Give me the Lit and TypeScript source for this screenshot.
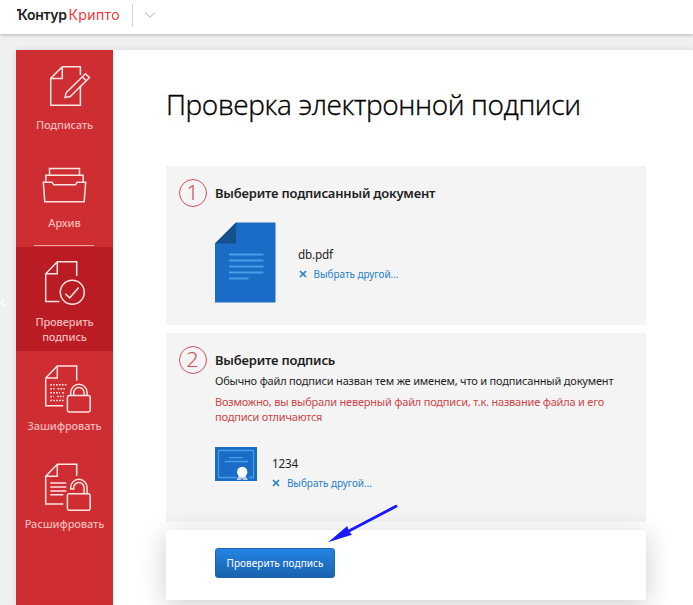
import { LitElement, html, css, svg } from "lit";
import { customElement } from "lit/decorators.js";

const page = (top: number, bottom: number, rightEnd: number, bottomEnd: number) =>
  svg`<path d="M60.7 ${rightEnd}V${top}H41.3L29.7 ${top + 12}V${bottom}H${bottomEnd}M41.3 ${top}V${top + 12}H29.7" />`;

const icons = {
  sign: svg`
    <path d="M64.4 25V16.7H46.3L34.7 28.4V55.3H64.4V35.5M46.3 16.7V28.4H34.7" />
    <path d="M49 47.6L50.2 42.6L69.4 23.7L73.5 27.6L54.3 46.6ZM66.2 26.8L70.2 30.8" />`,
  archive: svg`
    <path d="M33.5 27V20.5H63.5V27M29.8 34V27.3H67.2V34" />
    <path d="M27.3 34.2H36L37.7 36.7H59.6L61.2 34.2H69.7L68.2 53.7H28.8Z" />`,
  verify: svg`${page(14.7, 54.5, 29, 43.5)}
    <circle cx="56.3" cy="45.2" r="12" />
    <path d="M49.3 46.7L53.7 50.8L62.7 40.5" />`,
  encrypt: svg`${page(15, 54.7, 29.7, 47.3)}
    <path stroke-dasharray="1.7 1.2" d="M34.3 33.7H51M34.3 37.7H38.5M41.5 37.7H50M34.3 41.7H44M46 41.7H49M34.3 45.6H38M41 45.6H48M34.3 49.6H48" />
    <rect x="51.4" y="44.5" width="22.8" height="16.4" rx="2" />
    <path d="M54.7 44.5V41.5a8.2 8.2 0 0 1 16.4 0V44.5M57.7 44.5V41.7a5.2 5.2 0 0 1 10.4 0V44.5" />`,
  decrypt: svg`${page(15.3, 55, 27, 47.3)}
    <path d="M34.3 34H50.3M34.3 38H50.3M34.3 42H50.3M34.3 45.8H47.3" />
    <rect x="51.4" y="44.8" width="22.8" height="16.4" rx="2" />
    <path d="M71.1 44.8V38.5a8.2 8.2 0 0 0-16.4 0V40H57.7V38.8a5.2 5.2 0 0 1 10.4 0V44.8" />`,
};

const nav = [
  { icon: icons.sign, label: "Подписать", cls: "" },
  { icon: icons.archive, label: "Архив", cls: "archive" },
  { icon: icons.verify, label: "Проверить подпись", cls: "active" },
  { icon: icons.encrypt, label: "Зашифровать", cls: "" },
  { icon: icons.decrypt, label: "Расшифровать", cls: "" },
];

@customElement("app-root")
export class AppRoot extends LitElement {
  static styles = css`
    :host {
      display: flex; flex-direction: column; height: 605px; overflow: hidden;
      position: relative; box-sizing: border-box; background: #f0f0f0;
      font-family: "Noto Sans", "Open Sans", sans-serif; color: #1f1f1f;
    }
    svg { display: block; flex: none; }
    h1, h2, p { margin: 0; }
    header {
      flex: none; height: 34px; background: #fff; display: flex; align-items: flex-start;
      box-shadow: 0 1px 3px rgba(0, 0, 0, .25); padding-left: 17px; box-sizing: border-box;
    }
    .logo { display: flex; font: 14px/20px Inter, sans-serif; margin-top: 5px; height: 20px; width: 115px; }
    .nub { width: 2px; height: 2px; background: #222; margin: 4px -1px 0 0; }
    .brand { font-weight: 600; color: #222; width: 50.5px; letter-spacing: -.3px; }
    .product { color: #f0383c; letter-spacing: .4px; }
    .split { width: 1px; height: 23px; background: #d4d4d4; margin-top: 4px; }
    .caret { margin: 11px 0 0 10.5px; }
    .stage { flex: 1; display: flex; margin: 16px 0 0 16px; box-shadow: 0 0 6px rgba(0, 0, 0, .1); }
    nav { width: 97px; flex: none; background: #ce2e32; }
    .item { height: 98px; text-align: center; color: #f3b9ba; font-size: 11px; line-height: 15px; }
    .item p { width: 80px; margin: 0 auto; letter-spacing: -.12px; font-weight: 500; }
    .item.archive { height: 99px; display: flex; flex-direction: column; }
    .item.archive::after { content: ""; width: 60px; height: 1px; background: #eda6a8; margin: auto auto 1px 18px; }
    .item.active { height: 104px; background: #b91c23; }
    .item svg { stroke: #fbe4e4; stroke-width: 1.5; fill: none; }
    main { flex: 1; background: #fff; padding-left: 53px; }
    h1 {
      font: 300 28px/38px "Open Sans", sans-serif; letter-spacing: -.4px; color: #000;
      -webkit-text-stroke: .35px #000;
      padding-top: 35px; height: 81px; white-space: nowrap;
    }
    .panel {
      width: 480px; box-sizing: border-box; background: #f4f4f4; margin-bottom: 8px;
      display: flex; gap: 8px; padding: 13px 0 0 13px;
    }
    .first { height: 159px; }
    .second { height: 189px; }
    .num {
      width: 28px; height: 28px; box-sizing: border-box; border: 1px solid #d35055; border-radius: 50%;
      font: 300 21px/25px "Open Sans", sans-serif; color: #d35055; text-align: center; flex: none;
      -webkit-text-stroke: .2px #d35055; margin: -.4px .4px 0 -.4px;
    }
    h2 { font-size: 13px; line-height: 18px; font-weight: 600; letter-spacing: -.2px; padding-top: 5px; }
    .hint { font-size: 11px; line-height: 15px; letter-spacing: -.18px; margin-top: 4px; white-space: nowrap; }
    .warn { font-size: 11px; line-height: 15px; letter-spacing: -.2px; margin-top: 6px; color: #cf4548; white-space: nowrap; }
    .file { display: flex; }
    .first .file { margin-top: 20px; gap: 22px; }
    .second .file { margin-top: 23px; gap: 15px; }
    .name { font-size: 11.7px; line-height: 16px; letter-spacing: -.2px; }
    .first .name { padding-top: 24px; }
    .second .name { padding-top: 8px; }
    .link {
      display: flex; align-items: center; gap: 5.5px; font-size: 10px; line-height: 14px;
      letter-spacing: -.04px; color: #2780c8; margin-top: 5px;
    }
    .second .link { margin-left: -.6px; }
    .action {
      width: 480px; height: 70px; box-sizing: border-box; background: #fff; position: relative;
      padding: 18px 0 0 49px; box-shadow: 0 5px 28px rgba(0, 0, 0, .2);
    }
    button {
      display: block; width: 120px; height: 30px; padding: 0; border: 1px solid #1b64ad; border-radius: 3px;
      background: linear-gradient(#2384e4, #1a62af); color: #fff;
      font: 10px/26px "Noto Sans", sans-serif; letter-spacing: .05px;
    }
    .arrow { position: absolute; left: 325px; top: 500px; }
    .back { position: absolute; left: 0; top: 299px; }
  `;

  private link() {
    return html`<div class="link">
      <svg width="10" height="8"><path d="M2 1L8 7M8 1L2 7" stroke="#2780c8" stroke-width="1.7" /></svg>
      <span>Выбрать другой...</span>
    </div>`;
  }

  render() {
    return html`
      <header>
        <div class="logo"><i class="nub"></i><span class="brand">Контур</span><span class="product">Крипто</span></div>
        <div class="split"></div>
        <svg class="caret" width="12" height="8"><path d="M1 1.5L6 6L11 1.5" fill="none" stroke="#d0d0d0" stroke-width="1.4" /></svg>
      </header>
      <div class="stage">
        <nav>
          ${nav.map((n) => html`<div class="item ${n.cls}">
            <svg width="97" height="67">${n.icon}</svg><p>${n.label}</p>
          </div>`)}
        </nav>
        <main>
          <h1>Проверка электронной подписи</h1>
          <div class="panel first">
            <div class="num">1</div>
            <div>
              <h2>Выберите подписанный документ</h2>
              <div class="file">
                <svg width="61" height="81">
                  <path d="M21 .5H60.5V80.5H0V21.5Z" fill="#1a6cc6" />
                  <path d="M21 .5V21.5H0Z" fill="#15508a" />
                  <path d="M14 32.5H48.5M14 38.5H48.5M14 44.5H48.5M14 50.5H48.5M14 56.5H33.5" stroke="#479fe6" stroke-width="1.8" />
                </svg>
                <div><p class="name">db.pdf</p>${this.link()}</div>
              </div>
            </div>
          </div>
          <div class="panel second">
            <div class="num">2</div>
            <div>
              <h2>Выберите подпись</h2>
              <p class="hint">Обычно файл подписи назван тем же именем, что и подписанный документ</p>
              <p class="warn">Возможно, вы выбрали неверный файл подписи, т.к. название файла и его<br />подписи отличаются</p>
              <div class="file">
                <svg width="42" height="34">
                  <rect width="42" height="34" fill="#1a6cc6" />
                  <path d="M21.5 30.5H3.5V3.5H38.5V30.5H34M14 10.7H28M9.5 14.5H33" fill="none" stroke="#479fe6" stroke-width="1.3" />
                  <path d="M24 28L21.5 33H26L27 31L28 33H33L30 28Z" fill="#b9cde2" />
                  <circle cx="27.2" cy="25" r="5.2" fill="#fff" />
                </svg>
                <div><p class="name">1234</p>${this.link()}</div>
              </div>
            </div>
          </div>
          <div class="action"><button>Проверить подпись</button></div>
        </main>
      </div>
      <svg class="back" width="5" height="8"><path d="M4 1L1 4L4 7" fill="none" stroke="#fff" stroke-width="1.4" /></svg>
      <svg class="arrow" width="76" height="46">
        <path d="M71 6.3L22 32" stroke="#1a1aff" stroke-width="2.9" stroke-linecap="round" />
        <path d="M3 42.2L22.3 26L24 31.5L27 34.8Z" fill="#1a1aff" />
      </svg>
    `;
  }
}
